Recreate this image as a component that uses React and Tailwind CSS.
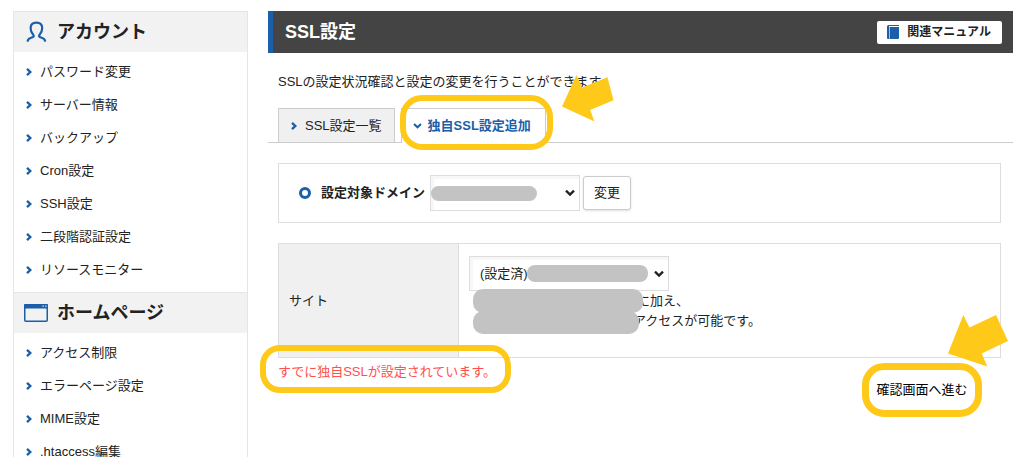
const menu = [
  {
    title: 'アカウント',
    icon: 'user',
    items: ['パスワード変更', 'サーバー情報', 'バックアップ', 'Cron設定', 'SSH設定', '二段階認証設定', 'リソースモニター'],
  },
  {
    title: 'ホームページ',
    icon: 'window',
    items: ['アクセス制限', 'エラーページ設定', 'MIME設定', '.htaccess編集'],
  },
];

function Chevron({ className }) {
  return (
    <svg viewBox="0 0 6 8" className={`h-2 w-1.5 shrink-0 ${className}`} fill="none" stroke="currentColor" strokeWidth="2.4" aria-hidden="true">
      <path d="M1 0.900 4.300 4 1 7.100" />
    </svg>
  );
}

function ChevronDown({ className }) {
  return (
    <svg viewBox="0 0 10 7" className={`shrink-0 ${className}`} fill="none" stroke="currentColor" strokeWidth="2.4" aria-hidden="true">
      <path d="M1 1.2 5 5 9 1.2" />
    </svg>
  );
}

function SectionIcon({ name }) {
  if (name === 'user') {
    return (
      <svg viewBox="0 0 24 22" className="h-[22px] w-6 shrink-0 text-[#1b5faa]" fill="none" stroke="currentColor" strokeWidth="2.2" aria-hidden="true">
        <path d="M3.600 20.600C3.700 18 5 17.200 7.200 16.700c2.600-.5 3.400-1.500 1.700-3.500C7.400 11.400 6.600 9.400 6.600 7c0-3.600 2.200-5.400 5.800-5.400S18.200 3.400 18.200 7c0 2.400-.8 4.400-2.300 6.200-1.700 2-.9 3 1.700 3.500 2.200.5 3.500 1.300 3.600 3.900" />
      </svg>
    );
  }
  return (
    <svg viewBox="0 0 24 18" className="h-[18px] w-6 shrink-0" aria-hidden="true">
      <rect x="0.75" y="0.75" width="22.500" height="16.500" rx="1" fill="none" stroke="#1b5faa" strokeWidth="1.500" />
      <path d="M0 1a1 1 0 0 1 1-1h22a1 1 0 0 1 1 1v3.500H0z" fill="#1b5faa" />
      <path d="M18.500 1.500h1.200v1.200h-1.200zM21.300 1.500h1.200v1.200h-1.200z" fill="#fff" />
    </svg>
  );
}

function Sidebar() {
  return (
    <nav className="w-[235px] shrink-0 border-x border-[#e5e5e5]">
      {menu.map((section) => (
        <section key={section.title}>
          <h2 className="flex h-[41px] items-center gap-[9px] border-t border-[#e5e5e5] bg-[#f2f2f2] pl-2.5 text-lg font-bold">
            <SectionIcon name={section.icon} />
            {section.title}
          </h2>
          <ul className="pt-[3px] pb-1.5">
            {section.items.map((item) => (
              <li key={item}>
                <a href="#" className="flex h-[33px] items-center gap-2 pl-3">
                  <Chevron className="text-[#1b5faa]" />
                  {item}
                </a>
              </li>
            ))}
          </ul>
        </section>
      ))}
    </nav>
  );
}

function Select({ label, id, value, className, children }) {
  return (
    <span className={`relative block ${className}`}>
      <select
        id={id}
        aria-label={label}
        className="h-full w-full appearance-none border border-[#ddd] bg-white pl-2.5 shadow-[inset_3px_3px_0_#f7f7f7]"
      >
        <option>{value}</option>
      </select>
      {children}
      <ChevronDown className="pointer-events-none absolute top-1/2 right-[5px] h-[7px] w-2.5 -translate-y-1/2" />
    </span>
  );
}

export default function App() {
  return (
    <div className="flex h-screen items-start gap-5 overflow-hidden bg-white pt-[11px] pr-[15px] pl-[13px] font-['Liberation_Sans','Noto_Sans_CJK_JP',sans-serif] text-[13px] leading-5 text-[#222]">
      <Sidebar />
      <main className="min-w-0 flex-1">
        <header className="flex h-[42px] items-center justify-between border-l-[5px] border-[#1b5faa] bg-[#444] pr-[11px] pl-3">
          <h1 className="text-lg font-bold text-white">SSL設定</h1>
          <a href="#" className="flex h-[23px] items-center gap-2 rounded-xs bg-white px-[11px] pl-2.5 text-xs font-bold">
            <svg viewBox="0 0 12 14" className="h-3.5 w-3" aria-hidden="true">
              <path d="M1.500 0H12v1H2v1h10v11a1 1 0 0 1-1 1H1a1 1 0 0 1-1-1V1.500A1.500 1.500 0 0 1 1.500 0z" fill="#1b5faa" />
              <path d="M2.500 2v12" stroke="#9dbcdc" strokeWidth="1" />
            </svg>
            関連マニュアル
          </a>
        </header>

        <p className="mt-[19px] pl-2.5">SSLの設定状況確認と設定の変更を行うことができます。</p>

        <div className="mt-4 flex gap-1.5 border-b border-[#ccc] pl-2.5">
          <a href="#" className="flex h-[34px] items-center gap-2 border border-b-0 border-[#ccc] bg-[#f0f0f0] px-3">
            <Chevron className="text-[#1b5faa]" />
            SSL設定一覧
          </a>
          <a
            href="#"
            aria-current="page"
            className="relative -mb-px flex h-[35px] items-center gap-1.5 border border-b-0 border-[#ccc] bg-white pr-3.5 pl-[11px] font-bold text-[#1b5faa]"
          >
            <ChevronDown className="h-1.5 w-[9px]" />
            独自SSL設定追加
            <span className="pointer-events-none absolute -top-3.5 -right-2 -bottom-[7px] -left-0.5 rounded-[22px] border-[6px] border-[#ffc91a]" />
            <svg viewBox="0 0 52 47" className="pointer-events-none absolute -top-[34px] left-full ml-[17px] h-[47px] w-[52px]" fill="#ffc91a" aria-hidden="true">
              <path d="M0 31.500 14.500 0 20.200 12.500 45.500 2.300 51.500 25.200 28.200 35 32.500 46.500z" />
            </svg>
          </a>
        </div>

        <div className="mr-3 ml-2.5">
          <form className="mt-5 flex h-[60px] items-center border border-[#ddd] pl-5">
            <span className="mr-2.5 size-3 rounded-full border-[3px] border-[#1b5faa]" />
            <label htmlFor="domain" className="mr-[5px] font-bold">設定対象ドメイン</label>
            <Select id="domain" value="" className="h-9 w-[150px]">
              <span className="pointer-events-none absolute top-[11px] left-px h-[15px] w-[106px] rounded-full bg-[#c3c3c3]" />
            </Select>
            <button type="button" className="ml-[3px] h-[34px] w-12 rounded-[3px] border border-[#ccc] bg-white shadow-sm">変更</button>
          </form>

          <table className="mt-5 w-full border-collapse border border-[#ddd]">
            <tbody>
              <tr>
                <th scope="row" className="w-[180px] border border-[#ddd] bg-[#f0f0f0] px-2.5 text-left font-normal">サイト</th>
                <td className="px-2.5 pt-3 pb-[26px]">
                  <Select label="サイト" value="(設定済)" className="h-[35px] w-[200px]">
                    <span className="pointer-events-none absolute top-[9px] left-[58px] h-[17px] w-[121px] rounded-lg bg-[#c3c3c3]" />
                  </Select>
                  <div className="flex h-5 items-center pl-1">
                    <span className="relative h-6 w-[170px] rounded-[10px] bg-[#c3c3c3]" />
                    <span className="-ml-1.5">に加え、</span>
                  </div>
                  <div className="flex h-5 items-start pl-1">
                    <span className="relative h-[23px] w-[166px] rounded-[10px] bg-[#c3c3c3]" />
                    <span className="-ml-1.5">アクセスが可能です。</span>
                  </div>
                </td>
              </tr>
            </tbody>
          </table>

          <div className="flex items-start justify-between">
            <p className="relative mt-1 text-[#ff5050]">
              すでに独自SSLが設定されています。
              <span className="pointer-events-none absolute -top-[17px] -right-[15px] -bottom-[11px] -left-[18px] rounded-[20px] border-[6px] border-[#ffc91a]" />
            </p>
            <div className="relative mt-[5px] mr-[19px]">
              <button type="button" className="h-[54px] w-[120px] text-black">確認画面へ進む</button>
              <span className="pointer-events-none absolute inset-0 rounded-[22px] border-[7px] border-[#ffc91a]" />
              <svg viewBox="0 0 60 52" className="pointer-events-none absolute -top-12 left-[86px] h-[52px] w-[60px]" fill="#ffc91a" aria-hidden="true">
                <path d="M0 38.500 15.300 0 21.500 12.500 48 0 60 26 33.700 38.500 39.300 51.500z" />
              </svg>
            </div>
          </div>
        </div>
      </main>
    </div>
  );
}
